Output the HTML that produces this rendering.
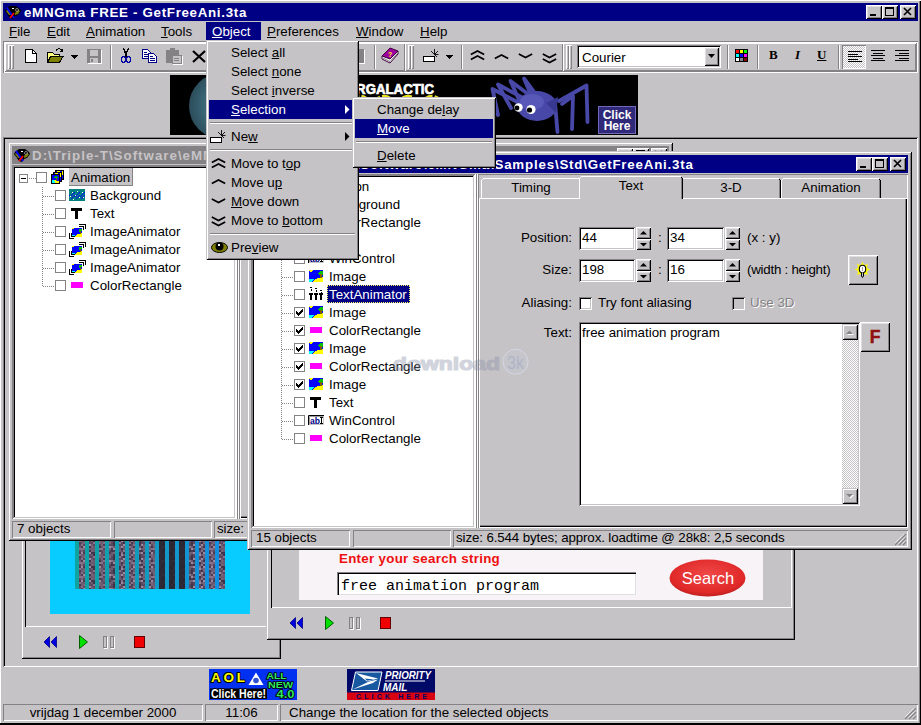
<!DOCTYPE html><html><head><meta charset="utf-8"><title>eMNGma FREE</title><style>
html,body{margin:0;padding:0;background:#c6c3c6;}
body{width:921px;height:725px;overflow:hidden;position:relative;font-family:"Liberation Sans",sans-serif;font-size:13.33px;color:#000;}
.a{position:absolute;box-sizing:border-box;}
.t{white-space:nowrap;line-height:18px;height:18px;}
u{text-decoration:underline;text-underline-offset:1px;text-decoration-thickness:1px;}
.win{background:#c6c3c6;box-shadow:inset 1px 1px #c6c3c6,inset -1px -1px #000,inset 2px 2px #fff,inset -2px -2px #848284;}
.btn{background:#c6c3c6;box-shadow:inset 1px 1px #fff,inset -1px -1px #000,inset 2px 2px #dfdfdf,inset -2px -2px #848284;}
.sunk{box-shadow:inset 1px 1px #848284,inset -1px -1px #fff,inset 2px 2px #000,inset -2px -2px #c6c3c6;}
.sunk1{box-shadow:inset 1px 1px #848284,inset -1px -1px #fff;}
.rais1{box-shadow:inset 1px 1px #fff,inset -1px -1px #848284;}
.navy{background:#000084;}
.gray{background:#848284;}
.white{background:#fff;}
.b{font-weight:bold;}
.w{color:#fff;}
.dis{color:#848284;text-shadow:1px 1px #fff;}
.chk{background-image:conic-gradient(#fff 25%,#c6c3c6 0 50%,#fff 0 75%,#c6c3c6 0);background-size:2px 2px;}
.vsep{width:2px;border-left:1px solid #848284;border-right:1px solid #fff;}
.hsep{height:2px;border-top:1px solid #848284;border-bottom:1px solid #fff;}
.dotv{width:1px;background-image:linear-gradient(#848284 50%,transparent 0);background-size:1px 2px;}
.doth{height:1px;background-image:linear-gradient(90deg,#848284 50%,transparent 0);background-size:2px 1px;}
.cb{width:11px;height:11px;background:#fff;border:1px solid #848284;}
</style></head><body>
<div class="a " style="left:0px;top:0px;width:921px;height:725px;background:#c6c3c6;box-shadow:inset 1px 1px #fff,inset -1px 0 #000,inset -2px 0 #848284;"></div>
<div class="a " style="left:0px;top:723px;width:921px;height:2px;background:#000;"></div>
<div class="a navy" style="left:3px;top:3px;width:915px;height:18px;"></div>
<svg class="a" style="left:5px;top:6px" width="16" height="13" viewBox="0 0 16 13" ><path d="M1 3 L5 0 H11 L15 3 L16 5 L13 9 L10 10 L8 13 L5 12 L3 9 L0 5 Z" fill="#000"/>
<path d="M2 4 L5 6 L6 9 L4 9 L1 5 Z" fill="#808000"/><path d="M10 7 L13 4 L15 5 L13 8 L10 9 Z" fill="#808000"/>
<circle cx="12" cy="4" r="1.500" fill="none" stroke="#a0a0a0" stroke-width="0.800"/>
<path d="M2 2 L9 12" stroke="#0000ff" stroke-width="2"/>
<path d="M9 7 L5 12" stroke="#ff0000" stroke-width="1.800"/>
<rect x="7" y="2" width="2" height="1" fill="#fff"/></svg>
<div class="a t b w" style="left:24px;top:4px;letter-spacing:0.69px;">eMNGma FREE - GetFreeAni.3ta</div>
<div class="a btn" style="left:866px;top:5px;width:16px;height:14px;"><svg class="a" style="left:0px;top:0px" width="16" height="14" viewBox="0 0 16 14" ><rect x="4" y="9" width="6" height="2" fill="#000"/></svg></div><div class="a btn" style="left:882px;top:5px;width:16px;height:14px;"><svg class="a" style="left:0px;top:0px" width="16" height="14" viewBox="0 0 16 14" ><rect x="3.5" y="3.5" width="8" height="7" fill="none" stroke="#000"/><rect x="3" y="2" width="9" height="2" fill="#000"/></svg></div><div class="a btn" style="left:900px;top:5px;width:16px;height:14px;"><svg class="a" style="left:0px;top:0px" width="16" height="14" viewBox="0 0 16 14" ><path d="M4 3 L11 10 M11 3 L4 10" stroke="#000" stroke-width="1.6" fill="none"/></svg></div>
<div class="a t " style="left:9px;top:23px;"><u>F</u>ile</div>
<div class="a t " style="left:47px;top:23px;"><u>E</u>dit</div>
<div class="a t " style="left:86px;top:23px;"><u>A</u>nimation</div>
<div class="a t " style="left:161px;top:23px;"><u>T</u>ools</div>
<div class="a t " style="left:267px;top:23px;"><u>P</u>references</div>
<div class="a t " style="left:356px;top:23px;"><u>W</u>indow</div>
<div class="a t " style="left:420px;top:23px;"><u>H</u>elp</div>
<div class="a navy" style="left:206px;top:22px;width:55px;height:19px;"></div>
<div class="a t w" style="left:212px;top:23px;"><u>O</u>bject</div>
<div class="a " style="left:3px;top:41px;width:915px;height:32px;box-shadow:inset 1px 1px #848284,inset -1px -1px #fff,inset 2px 2px #fff,inset -2px -2px #848284;"></div>
<div class="a rais1" style="left:5px;top:43px;width:400px;height:28px;"></div><div class="a rais1" style="left:8px;top:45px;width:3px;height:24px;"></div><div class="a rais1" style="left:11px;top:45px;width:3px;height:24px;"></div>
<div class="a rais1" style="left:405px;top:43px;width:158px;height:28px;"></div><div class="a rais1" style="left:408px;top:45px;width:3px;height:24px;"></div><div class="a rais1" style="left:411px;top:45px;width:3px;height:24px;"></div>
<div class="a rais1" style="left:563px;top:43px;width:353px;height:28px;"></div><div class="a rais1" style="left:566px;top:45px;width:3px;height:24px;"></div><div class="a rais1" style="left:569px;top:45px;width:3px;height:24px;"></div>
<svg class="a" style="left:25px;top:49px" width="12" height="14" viewBox="0 0 12 14" shape-rendering="crispEdges"><path d="M0.5 0.5 H7.5 L11.5 4.5 V13.5 H0.5 Z" fill="#fff" stroke="#000"/><path d="M7.5 0.5 V4.5 H11.5" fill="none" stroke="#000"/></svg>
<svg class="a" style="left:47px;top:47px" width="17" height="16" viewBox="0 0 17 16" shape-rendering="crispEdges"><path d="M0.5 5.5 H5.5 L7 7 H12.5 V15.5 H0.5 Z" fill="#ffff80" stroke="#000"/><path d="M3.5 9.5 H16 L12.5 15.5 H0.5 Z" fill="#808000" stroke="#000"/><path d="M9 3.5 C11 1 14 1.5 15 4 M15.5 1.5 V4.5 H12.5" fill="none" stroke="#000"/></svg>
<svg class="a" style="left:71px;top:55px" width="7" height="4" viewBox="0 0 7 4" shape-rendering="crispEdges"><path d="M0 0 H7 L3.5 4 Z" fill="#000"/></svg>
<svg class="a" style="left:87px;top:49px" width="15" height="15" viewBox="0 0 15 15" shape-rendering="crispEdges"><rect x="0" y="0" width="14" height="14" fill="#848284"/><rect x="3" y="1" width="8" height="6" fill="#c6c3c6"/><rect x="3" y="9" width="8" height="5" fill="#c6c3c6"/><rect x="4" y="10" width="2" height="3" fill="#848284"/><path d="M14.5 1 V14.5 H1" stroke="#fff" fill="none"/></svg>
<div class="a vsep" style="left:110px;top:45px;width:2px;height:24px;"></div>
<svg class="a" style="left:121px;top:48px" width="10" height="15" viewBox="0 0 10 15" shape-rendering="crispEdges"><path d="M2.5 0 L6 9 M7.5 0 L4 9" stroke="#000" stroke-width="1.4" fill="none"/><ellipse cx="2.5" cy="11.5" rx="2" ry="2.8" fill="none" stroke="#0000a0" stroke-width="1.3"/><ellipse cx="7.5" cy="11.5" rx="2" ry="2.8" fill="none" stroke="#0000a0" stroke-width="1.3"/></svg>
<svg class="a" style="left:142px;top:49px" width="15" height="14" viewBox="0 0 15 14" shape-rendering="crispEdges"><path d="M0.5 0.5 H5.5 L8.5 3.5 V9.5 H0.5 Z" fill="#fff" stroke="#000084"/><path d="M6.5 4.5 H11.5 L14.5 7.5 V13.5 H6.5 Z" fill="#fff" stroke="#000084"/><path d="M2 3.5 H5 M2 5.5 H6 M2 7.5 H6 M8 7.5 H11 M8 9.5 H13 M8 11.5 H13" stroke="#000084"/></svg>
<svg class="a" style="left:166px;top:48px" width="17" height="17" viewBox="0 0 17 17" shape-rendering="crispEdges"><rect x="0" y="2" width="13" height="13" rx="1" fill="#848284"/><rect x="4" y="0" width="5" height="4" fill="#848284"/><rect x="6" y="7" width="9" height="8" fill="#c6c3c6" stroke="#848284"/><path d="M8 10.5 H13 M8 12.5 H13" stroke="#848284"/><path d="M16.5 8 V16.5 H7" stroke="#fff" fill="none"/></svg>
<svg class="a" style="left:192px;top:50px" width="14" height="13" viewBox="0 0 14 13" shape-rendering="crispEdges"><path d="M1 1 L13 12 M13 1 L1 12" stroke="#000" stroke-width="2.2" fill="none" shape-rendering="auto"/></svg>
<div class="a vsep" style="left:214px;top:45px;width:2px;height:24px;"></div>
<div class="a " style="left:350px;top:49px;width:14px;height:14px;background:#848284;box-shadow:1px 1px #fff;"></div>
<div class="a vsep" style="left:374px;top:45px;width:2px;height:24px;"></div>
<svg class="a" style="left:381px;top:47px" width="18" height="17" viewBox="0 0 18 17" ><path d="M1 9 L9 1 L17 4 L9 12 Z" fill="#a000a0" stroke="#400040" stroke-width="1"/><path d="M1 9 V12 L9 16 L17 7 V4 L9 12 Z" fill="#fff" stroke="#400040" stroke-width="1"/><path d="M1 10.5 L9 14.5 L17 5.5" stroke="#848284" fill="none"/><text x="7" y="9.5" font-size="7" font-weight="bold" fill="#ffff00" font-family="Liberation Sans,sans-serif">?</text></svg>
<svg class="a" style="left:423px;top:48px" width="16" height="15" viewBox="0 0 16 15" ><rect x="0.5" y="8.5" width="11" height="5" fill="#fff" stroke="#000"/><path d="M11.5 6.5 V1 M11.5 6.5 L8 3 M11.5 6.5 L15 3 M11.5 6.5 H15.5 M11.5 6.5 L14 9" stroke="#000" stroke-width="0.9" fill="none"/></svg>
<svg class="a" style="left:446px;top:55px" width="7" height="4" viewBox="0 0 7 4" shape-rendering="crispEdges"><path d="M0 0 H7 L3.5 4 Z" fill="#000"/></svg>
<div class="a vsep" style="left:461px;top:45px;width:2px;height:24px;"></div>
<svg class="a" style="left:470px;top:49.5px" width="15" height="11" viewBox="0 0 15 11" ><path d="M0.8 4.5 L7.5 1 L14.2 4.5" stroke="#000" stroke-width="1.7" fill="none" stroke-linejoin="miter"/><path d="M0.8 9.5 L7.5 6 L14.2 9.5" stroke="#000" stroke-width="1.7" fill="none" stroke-linejoin="miter"/></svg>
<svg class="a" style="left:493.5px;top:54px" width="15" height="11" viewBox="0 0 15 11" ><path d="M0.8 4.5 L7.5 1 L14.2 4.5" stroke="#000" stroke-width="1.7" fill="none" stroke-linejoin="miter"/></svg>
<svg class="a" style="left:518px;top:53px" width="15" height="11" viewBox="0 0 15 11" ><path d="M0.8 1 L7.5 4.5 L14.2 1" stroke="#000" stroke-width="1.7" fill="none" stroke-linejoin="miter"/></svg>
<svg class="a" style="left:542px;top:53px" width="15" height="11" viewBox="0 0 15 11" ><path d="M0.8 1 L7.5 4.5 L14.2 1" stroke="#000" stroke-width="1.7" fill="none" stroke-linejoin="miter"/><path d="M0.8 6 L7.5 9.5 L14.2 6" stroke="#000" stroke-width="1.7" fill="none" stroke-linejoin="miter"/></svg>
<div class="a sunk white" style="left:577px;top:45px;width:144px;height:23px;"></div>
<div class="a t " style="left:582px;top:49px;">Courier</div>
<div class="a btn" style="left:704px;top:47px;width:15px;height:19px;"><svg class="a" style="left:0px;top:0px" width="15" height="19" viewBox="0 0 15 19" ><path d="M4 7 H11 L7.5 11 Z" fill="#000"/></svg></div>
<div class="a vsep" style="left:727px;top:45px;width:2px;height:24px;"></div>
<svg class="a" style="left:735px;top:49px" width="13" height="13" viewBox="0 0 13 13" shape-rendering="crispEdges"><rect x="0" y="0" width="13" height="13" fill="#000"/><rect x="1" y="1" width="3" height="3" fill="#ff0000"/><rect x="5" y="1" width="3" height="3" fill="#ffff00"/><rect x="9" y="1" width="3" height="3" fill="#00ff00"/><rect x="1" y="5" width="3" height="3" fill="#00ffff"/><rect x="5" y="5" width="3" height="3" fill="#0000ff"/><rect x="9" y="5" width="3" height="3" fill="#ff00ff"/><rect x="1" y="9" width="3" height="3" fill="#ffffff"/><rect x="5" y="9" width="3" height="3" fill="#848284"/><rect x="9" y="9" width="3" height="3" fill="#800000"/></svg>
<div class="a vsep" style="left:757px;top:45px;width:2px;height:24px;"></div>
<div class="a t b" style="left:769px;top:46px;font-family:Liberation Serif,serif;font-size:13px;">B</div>
<div class="a t b" style="left:795px;top:46px;font-family:Liberation Serif,serif;font-size:13px;font-style:italic;">I</div>
<div class="a t b" style="left:817px;top:46px;font-family:Liberation Serif,serif;font-size:13px;"><u>U</u></div>
<div class="a vsep" style="left:838px;top:45px;width:2px;height:24px;"></div>
<div class="a sunk1 chk" style="left:842px;top:45px;width:24px;height:24px;"></div>
<svg class="a" style="left:848px;top:51px" width="14" height="11" viewBox="0 0 14 11" shape-rendering="crispEdges"><rect x="0" y="0" width="14" height="1" fill="#000"/><rect x="0" y="3" width="10" height="1" fill="#000"/><rect x="0" y="5" width="14" height="1" fill="#000"/><rect x="0" y="8" width="10" height="1" fill="#000"/><rect x="0" y="10" width="14" height="1" fill="#000"/></svg>
<svg class="a" style="left:871px;top:50px" width="14" height="11" viewBox="0 0 14 11" shape-rendering="crispEdges"><rect x="0.0" y="0" width="14" height="1" fill="#000"/><rect x="2.0" y="3" width="10" height="1" fill="#000"/><rect x="0.0" y="5" width="14" height="1" fill="#000"/><rect x="2.0" y="8" width="10" height="1" fill="#000"/><rect x="0.0" y="10" width="14" height="1" fill="#000"/></svg>
<svg class="a" style="left:895px;top:50px" width="14" height="11" viewBox="0 0 14 11" shape-rendering="crispEdges"><rect x="0" y="0" width="14" height="1" fill="#000"/><rect x="4" y="3" width="10" height="1" fill="#000"/><rect x="0" y="5" width="14" height="1" fill="#000"/><rect x="4" y="8" width="10" height="1" fill="#000"/><rect x="0" y="10" width="14" height="1" fill="#000"/></svg>
<svg class="a" style="left:170px;top:75px" width="468" height="60" viewBox="0 0 468 60" ><defs><radialGradient id="pl" cx="0.6" cy="0.5" r="0.6"><stop offset="0" stop-color="#58a0b8"/><stop offset="0.6" stop-color="#3a6878"/><stop offset="1" stop-color="#2c4c5a"/></radialGradient>
<clipPath id="bc"><rect x="0" y="0" width="468" height="60"/></clipPath></defs>
<rect x="0" y="0" width="468" height="60" fill="#000"/>
<g clip-path="url(#bc)">
<circle cx="52" cy="31" r="33" fill="url(#pl)"/>
<text x="156" y="18.500" font-family="Liberation Sans,sans-serif" font-weight="bold" font-size="14.500" fill="#fff" stroke="#fff" stroke-width="0.700" textLength="108" lengthAdjust="spacingAndGlyphs">INTERGALACTIC</text>
<path d="M160 24 q6 -4 12 0 t12 0 t12 0 t12 0 t12 0 t12 0 t12 0 t12 0 t12 0" stroke="#e8e020" stroke-width="4.500" fill="none" stroke-dasharray="9 2"/>
<g stroke="#4848a8" stroke-width="3.800" fill="none" stroke-linecap="round" stroke-linejoin="round">
<path d="M351 29 L322.500 14 L328 40"/>
<path d="M355 24 L328 9.500 L341 33"/>
<path d="M358 19 L340.500 6 L350 27"/>
<path d="M364 17 L354 3.500 L361 20"/>
<path d="M385 28 L387.500 57"/>
<path d="M389 26 L416.500 10.500 L417.500 47"/>
<path d="M392 29 L403 21 L402 54"/>
</g>
<ellipse cx="367" cy="31" rx="20" ry="15" fill="#4848a8"/>
<ellipse cx="362" cy="27" rx="12" ry="8" fill="#5858b8"/>
<path d="M376 28 L388 22 L386 38 Z" fill="#383890"/>
<circle cx="348.5" cy="32.5" r="4.2" fill="#fff"/><circle cx="347" cy="33" r="2.4" fill="#000"/>
<circle cx="361" cy="34.5" r="4.6" fill="#fff"/><circle cx="359.5" cy="35" r="2.6" fill="#000"/>
<rect x="428.500" y="31.500" width="37" height="27" fill="#302878" stroke="#7068b8"/>
<text x="447" y="43.500" text-anchor="middle" font-family="Liberation Sans,sans-serif" font-weight="bold" font-size="12" fill="#fff">Click</text>
<text x="447" y="55" text-anchor="middle" font-family="Liberation Sans,sans-serif" font-weight="bold" font-size="12" fill="#fff">Here</text>
</g></svg>
<div class="a " style="left:3px;top:137px;width:915px;height:530px;box-shadow:inset 1px 1px #848284,inset -1px -1px #fff,inset 2px 2px #000,inset -2px -2px #c6c3c6;"></div>
<div class="a win" style="left:21px;top:400px;width:260px;height:259px;"></div>
<div class="a " style="left:25px;top:420px;width:252px;height:207px;box-shadow:inset 1px 1px #000,inset -1px -1px #fff;"></div>
<div class="a " style="left:50px;top:430px;width:200px;height:184px;background:#08cbff;"></div>
<svg class="a" style="left:75px;top:430px" width="150" height="159" viewBox="0 0 150 159" shape-rendering="crispEdges"><defs><pattern id="nz" width="26" height="14" patternUnits="userSpaceOnUse"><rect width="26" height="14" fill="#6c5a70"/><rect x="0" y="2" width="2" height="2" fill="#7a6478"/><rect x="0" y="6" width="2" height="2" fill="#8a7088"/><rect x="0" y="8" width="2" height="2" fill="#5a4860"/><rect x="0" y="10" width="2" height="2" fill="#5a4860"/><rect x="2" y="0" width="2" height="2" fill="#8a7088"/><rect x="2" y="2" width="2" height="2" fill="#4a3c50"/><rect x="2" y="4" width="2" height="2" fill="#8a7088"/><rect x="2" y="6" width="2" height="2" fill="#5a4860"/><rect x="2" y="12" width="2" height="2" fill="#5a4860"/><rect x="4" y="0" width="2" height="2" fill="#4a3c50"/><rect x="4" y="2" width="2" height="2" fill="#5a4860"/><rect x="4" y="6" width="2" height="2" fill="#8a7088"/><rect x="4" y="8" width="2" height="2" fill="#5a4860"/><rect x="4" y="10" width="2" height="2" fill="#4a3c50"/><rect x="4" y="12" width="2" height="2" fill="#8a7088"/><rect x="6" y="2" width="2" height="2" fill="#8a7088"/><rect x="6" y="4" width="2" height="2" fill="#4a3c50"/><rect x="6" y="6" width="2" height="2" fill="#8a7088"/><rect x="6" y="8" width="2" height="2" fill="#7a6478"/><rect x="6" y="10" width="2" height="2" fill="#a088a0"/><rect x="8" y="0" width="2" height="2" fill="#7a6478"/><rect x="8" y="2" width="2" height="2" fill="#5a4860"/><rect x="8" y="4" width="2" height="2" fill="#a088a0"/><rect x="8" y="6" width="2" height="2" fill="#7a6478"/><rect x="8" y="8" width="2" height="2" fill="#5a4860"/><rect x="8" y="10" width="2" height="2" fill="#4a3c50"/><rect x="10" y="0" width="2" height="2" fill="#5a4860"/><rect x="10" y="2" width="2" height="2" fill="#5a4860"/><rect x="10" y="4" width="2" height="2" fill="#8a7088"/><rect x="10" y="6" width="2" height="2" fill="#4a3c50"/><rect x="10" y="8" width="2" height="2" fill="#40344a"/><rect x="12" y="0" width="2" height="2" fill="#40344a"/><rect x="12" y="2" width="2" height="2" fill="#40344a"/><rect x="12" y="6" width="2" height="2" fill="#a088a0"/><rect x="12" y="8" width="2" height="2" fill="#4a3c50"/><rect x="12" y="10" width="2" height="2" fill="#7a6478"/><rect x="12" y="12" width="2" height="2" fill="#4a3c50"/><rect x="14" y="0" width="2" height="2" fill="#5a4860"/><rect x="14" y="2" width="2" height="2" fill="#a088a0"/><rect x="14" y="4" width="2" height="2" fill="#40344a"/><rect x="14" y="8" width="2" height="2" fill="#40344a"/><rect x="14" y="10" width="2" height="2" fill="#a088a0"/><rect x="14" y="12" width="2" height="2" fill="#5a4860"/><rect x="16" y="0" width="2" height="2" fill="#5a4860"/><rect x="16" y="4" width="2" height="2" fill="#7a6478"/><rect x="16" y="8" width="2" height="2" fill="#7a6478"/><rect x="16" y="10" width="2" height="2" fill="#40344a"/><rect x="18" y="0" width="2" height="2" fill="#8a7088"/><rect x="18" y="2" width="2" height="2" fill="#5a4860"/><rect x="18" y="10" width="2" height="2" fill="#40344a"/><rect x="18" y="12" width="2" height="2" fill="#40344a"/><rect x="20" y="0" width="2" height="2" fill="#5a4860"/><rect x="20" y="2" width="2" height="2" fill="#5a4860"/><rect x="20" y="4" width="2" height="2" fill="#a088a0"/><rect x="20" y="6" width="2" height="2" fill="#40344a"/><rect x="20" y="8" width="2" height="2" fill="#5a4860"/><rect x="20" y="10" width="2" height="2" fill="#8a7088"/><rect x="20" y="12" width="2" height="2" fill="#a088a0"/><rect x="22" y="0" width="2" height="2" fill="#40344a"/><rect x="22" y="2" width="2" height="2" fill="#a088a0"/><rect x="22" y="8" width="2" height="2" fill="#8a7088"/><rect x="22" y="10" width="2" height="2" fill="#40344a"/><rect x="24" y="0" width="2" height="2" fill="#7a6478"/><rect x="24" y="2" width="2" height="2" fill="#5a4860"/><rect x="24" y="4" width="2" height="2" fill="#40344a"/><rect x="24" y="6" width="2" height="2" fill="#8a7088"/><rect x="24" y="8" width="2" height="2" fill="#4a3c50"/><rect x="24" y="10" width="2" height="2" fill="#a088a0"/><rect x="24" y="12" width="2" height="2" fill="#7a6478"/></pattern></defs><rect width="150" height="160" fill="url(#nz)"/><rect x="0" y="0" width="4" height="160" fill="#10a4a0"/><rect x="10" y="0" width="4" height="160" fill="#10a3a5"/><rect x="20" y="0" width="4" height="160" fill="#11a1a9"/><rect x="30" y="0" width="4" height="160" fill="#11a0ae"/><rect x="40" y="0" width="4" height="160" fill="#119eb2"/><rect x="50" y="0" width="4" height="160" fill="#119db7"/><rect x="60" y="0" width="4" height="160" fill="#129bbb"/><rect x="70" y="0" width="4" height="160" fill="#129ac0"/><rect x="80" y="0" width="4" height="160" fill="#1299c5"/><rect x="90" y="0" width="4" height="160" fill="#1397c9"/><rect x="100" y="0" width="4" height="160" fill="#1396ce"/><rect x="110" y="0" width="4" height="160" fill="#1394d2"/><rect x="120" y="0" width="4" height="160" fill="#1393d7"/><rect x="130" y="0" width="4" height="160" fill="#1491db"/><rect x="140" y="0" width="4" height="160" fill="#1490e0"/><rect x="84" y="0" width="6" height="160" fill="#26242e" opacity="0.900"/><rect x="94" y="0" width="6" height="160" fill="#26242e" opacity="0.900"/><rect x="104" y="0" width="6" height="160" fill="#26242e" opacity="0.900"/></svg>
<svg class="a" style="left:44px;top:635px" width="110" height="14" viewBox="0 0 110 14" ><path d="M0 7 L5.500 1.500 V12.500 Z M7 7 L12.500 1.500 V12.500 Z" fill="#0000e0" stroke="#000084" stroke-width="0.800"/><path d="M35.500 0.500 L43.500 7 L35.500 13.500 Z" fill="#00e000" stroke="#006000" stroke-width="1"/><rect x="59.500" y="1.500" width="3" height="11" fill="#c6c3c6" stroke="#848284"/><rect x="66.500" y="1.500" width="3" height="11" fill="#c6c3c6" stroke="#848284"/><path d="M63.500 2 V13.500 H60 M70.500 2 V13.500 H67" stroke="#fff" fill="none"/><rect x="90.500" y="1.500" width="10" height="11" fill="#f00000" stroke="#600000"/></svg>
<div class="a win" style="left:266px;top:400px;width:529px;height:240px;"></div>
<div class="a " style="left:271px;top:420px;width:521px;height:188px;box-shadow:inset 1px 1px #000,inset -1px -1px #fff;"></div>
<div class="a " style="left:299px;top:430px;width:464px;height:170px;background:#f7f3f7;"></div>
<div class="a t b" style="left:339px;top:550px;color:#ee1010;letter-spacing:0.29px;">Enter your search string</div>
<div class="a white" style="left:337px;top:572px;width:299px;height:23px;box-shadow:inset 1px 1px #848284,inset 2px 2px #000,inset -1px -1px #e0e0e0;"></div>
<div class="a t " style="left:341px;top:578px;font-family:Liberation Mono,monospace;font-size:15px;">free animation program</div>
<svg class="a" style="left:669px;top:559px" width="78" height="38" viewBox="0 0 78 38" ><defs><radialGradient id="sb" cx="0.5" cy="0.4" r="0.7"><stop offset="0" stop-color="#f04848"/><stop offset="0.7" stop-color="#e02828"/><stop offset="1" stop-color="#a01818"/></radialGradient></defs><ellipse cx="38.500" cy="19" rx="38" ry="18.500" fill="url(#sb)"/><text x="39" y="24.500" text-anchor="middle" font-family="Liberation Sans,sans-serif" font-size="16.500" fill="#fff">Search</text></svg>
<svg class="a" style="left:290px;top:616px" width="110" height="14" viewBox="0 0 110 14" ><path d="M0 7 L5.500 1.500 V12.500 Z M7 7 L12.500 1.500 V12.500 Z" fill="#0000e0" stroke="#000084" stroke-width="0.800"/><path d="M35.500 0.500 L43.500 7 L35.500 13.500 Z" fill="#00e000" stroke="#006000" stroke-width="1"/><rect x="59.500" y="1.500" width="3" height="11" fill="#c6c3c6" stroke="#848284"/><rect x="66.500" y="1.500" width="3" height="11" fill="#c6c3c6" stroke="#848284"/><path d="M63.500 2 V13.500 H60 M70.500 2 V13.500 H67" stroke="#fff" fill="none"/><rect x="90.500" y="1.500" width="10" height="11" fill="#f00000" stroke="#600000"/></svg>
<div class="a win" style="left:8px;top:142px;width:665px;height:399px;"></div><div class="a gray" style="left:12px;top:146px;width:657px;height:18px;"></div><svg class="a" style="left:14px;top:149px" width="16" height="13" viewBox="0 0 16 13" ><path d="M1 3 L5 0 H11 L15 3 L16 5 L13 9 L10 10 L8 13 L5 12 L3 9 L0 5 Z" fill="#000"/>
<path d="M2 4 L5 6 L6 9 L4 9 L1 5 Z" fill="#808000"/><path d="M10 7 L13 4 L15 5 L13 8 L10 9 Z" fill="#808000"/>
<circle cx="12" cy="4" r="1.500" fill="none" stroke="#a0a0a0" stroke-width="0.800"/>
<path d="M2 2 L9 12" stroke="#0000ff" stroke-width="2"/>
<path d="M9 7 L5 12" stroke="#ff0000" stroke-width="1.800"/>
<rect x="7" y="2" width="2" height="1" fill="#fff"/></svg><div class="a t b" style="left:32px;top:147px;color:#c6c3c6;letter-spacing:1.0px;">D:\Triple-T\Software\eMNGma\Samples\Std\GetFreeAni.3ta</div><div class="a btn" style="left:617px;top:148px;width:16px;height:14px;"><svg class="a" style="left:0px;top:0px" width="16" height="14" viewBox="0 0 16 14" ><rect x="4" y="9" width="6" height="2" fill="#000"/></svg></div><div class="a btn" style="left:633px;top:148px;width:16px;height:14px;"><svg class="a" style="left:0px;top:0px" width="16" height="14" viewBox="0 0 16 14" ><rect x="3.5" y="3.5" width="8" height="7" fill="none" stroke="#000"/><rect x="3" y="2" width="9" height="2" fill="#000"/></svg></div><div class="a btn" style="left:651px;top:148px;width:16px;height:14px;"><svg class="a" style="left:0px;top:0px" width="16" height="14" viewBox="0 0 16 14" ><path d="M4 3 L11 10 M11 3 L4 10" stroke="#000" stroke-width="1.6" fill="none"/></svg></div><div class="a sunk white" style="left:12px;top:165px;width:224px;height:354px;"></div><div class="a " style="left:13px;top:166px;width:1px;height:352px;background:#848284;"></div><div class="a " style="left:13px;top:166px;width:222px;height:1px;background:#848284;"></div><div class="a " style="left:14px;top:167px;width:1px;height:350px;background:#000;"></div><div class="a " style="left:14px;top:167px;width:220px;height:1px;background:#000;"></div><div class="a " style="left:236px;top:165px;width:1px;height:354px;background:#fff;"></div><div class="a " style="left:237px;top:165px;width:1px;height:354px;background:#848284;"></div><div class="a " style="left:238px;top:165px;width:1px;height:354px;background:#fff;"></div><div class="a sunk1" style="left:239px;top:165px;width:430px;height:354px;"></div><div class="a dotv" style="left:42px;top:187px;width:1px;height:100px;"></div><div class="a " style="left:19px;top:174px;width:9px;height:9px;background:#fff;border:1px solid #848284;"><svg class="a" style="left:0px;top:0px" width="7" height="7" viewBox="0 0 7 7" shape-rendering="crispEdges"><rect x="1" y="3" width="5" height="1" fill="#000"/></svg></div><div class="a doth" style="left:29px;top:178px;width:7px;height:1px;"></div><div class="a cb" style="left:36px;top:172px;width:11px;height:11px;"></div><svg class="a" style="left:51px;top:170px" width="13" height="14" viewBox="0 0 13 14" shape-rendering="crispEdges"><rect x="4.5" y="0.5" width="8" height="9" fill="#0000ff" stroke="#000"/><rect x="11" y="1" width="1" height="4" fill="#ffff00"/><rect x="6" y="1" width="3" height="1" fill="#ffff00"/><rect x="2.5" y="2.5" width="8" height="9" fill="#0000ff" stroke="#000"/><rect x="9" y="3" width="1" height="4" fill="#ffff00"/><rect x="4" y="3" width="3" height="1" fill="#ffff00"/><rect x="0.5" y="4.5" width="8" height="9" fill="#0000ff" stroke="#000"/><path d="M1 11 L4 10 L8 11 V13 H1 Z" fill="#ffff00"/><path d="M1 10 H3 L4 12 L3 13 H1 Z" fill="#00ffff"/><path d="M3 8 L5 5 L7 8 H5.500 V10 H4.500 V8 Z" fill="#00c000"/><rect x="4.500" y="8" width="1" height="3" fill="#806000"/></svg><div class="a " style="left:69px;top:168px;width:8px;height:0px;"></div><div class="a t" style="left:69px;top:168px;height:18px;line-height:16px;padding:2px 3px 0 2px;background:#c6c3c6;box-shadow:inset -1px -1px #848284;">Animation</div><div class="a doth" style="left:43px;top:196px;width:11px;height:1px;"></div><div class="a cb" style="left:55px;top:190px;width:11px;height:11px;"></div><svg class="a" style="left:69px;top:189px" width="16" height="12" viewBox="0 0 16 12" shape-rendering="crispEdges"><clipPath id="bgc69187"><rect width="16" height="12"/></clipPath><g clip-path="url(#bgc69187)"><rect width="16" height="12" fill="#008080"/><path d="M-3.5 10.500 L0.5 6.500 L1.5 7.500 L5.5 3.500" stroke="#0000ff" stroke-width="1.400" fill="none"/><path d="M1.5 10.500 L5.5 6.500 L6.5 7.500 L10.5 3.500" stroke="#0000ff" stroke-width="1.400" fill="none"/><path d="M6.5 10.500 L10.5 6.500 L11.5 7.500 L15.5 3.500" stroke="#0000ff" stroke-width="1.400" fill="none"/><path d="M11.5 10.500 L15.5 6.500 L16.5 7.500 L20.5 3.500" stroke="#0000ff" stroke-width="1.400" fill="none"/><rect x="3" y="3" width="1" height="1" fill="#fff"/><rect x="8" y="2" width="1" height="1" fill="#fff"/><rect x="13" y="3" width="1" height="1" fill="#fff"/><rect x="1" y="7" width="1" height="1" fill="#fff"/><rect x="6" y="6" width="1" height="1" fill="#fff"/><rect x="10" y="8" width="1" height="1" fill="#fff"/><rect x="14" y="8" width="1" height="1" fill="#fff"/><rect x="4" y="10" width="1" height="1" fill="#fff"/></g></svg><div class="a t " style="left:90px;top:187px;">Background</div><div class="a doth" style="left:43px;top:214px;width:11px;height:1px;"></div><div class="a cb" style="left:55px;top:208px;width:11px;height:11px;"></div><svg class="a" style="left:71px;top:208px" width="11" height="11" viewBox="0 0 11 11" shape-rendering="crispEdges"><path d="M0 0 H11 V3 H7 V11 H4 V3 H0 Z" fill="#000"/></svg><div class="a t " style="left:90px;top:205px;">Text</div><div class="a doth" style="left:43px;top:232px;width:11px;height:1px;"></div><div class="a cb" style="left:55px;top:226px;width:11px;height:11px;"></div><svg class="a" style="left:69px;top:224px" width="17" height="16" viewBox="0 0 17 16" shape-rendering="crispEdges"><g transform="translate(3,4) scale(0.7143,0.75)"><rect width="14" height="12" fill="#0000ff"/><path d="M0 0 H4 L2 2 L0 1 Z" fill="#ffff00"/><path d="M0 9 H5 L3 12 H0 Z" fill="#00ffff"/><path d="M14 7 L9 8 L5 10 L3 12 H14 Z" fill="#ffff00"/><path d="M9 3 L11 1 L14 1 V5 L12 4 L10 5 Z" fill="#00c000"/><rect x="11" y="4" width="2" height="4" fill="#806000"/></g><path d="M9.500 0.500 H16.500 V5 M9.500 2.500 H14.500 V6" stroke="#000" fill="none"/><path d="M0.500 9 V14.500 H5 M2.500 9 V12.500 H6" stroke="#000" fill="none"/></svg><div class="a t " style="left:90px;top:223px;">ImageAnimator</div><div class="a doth" style="left:43px;top:250px;width:11px;height:1px;"></div><div class="a cb" style="left:55px;top:244px;width:11px;height:11px;"></div><svg class="a" style="left:69px;top:242px" width="17" height="16" viewBox="0 0 17 16" shape-rendering="crispEdges"><g transform="translate(3,4) scale(0.7143,0.75)"><rect width="14" height="12" fill="#0000ff"/><path d="M0 0 H4 L2 2 L0 1 Z" fill="#ffff00"/><path d="M0 9 H5 L3 12 H0 Z" fill="#00ffff"/><path d="M14 7 L9 8 L5 10 L3 12 H14 Z" fill="#ffff00"/><path d="M9 3 L11 1 L14 1 V5 L12 4 L10 5 Z" fill="#00c000"/><rect x="11" y="4" width="2" height="4" fill="#806000"/></g><path d="M9.500 0.500 H16.500 V5 M9.500 2.500 H14.500 V6" stroke="#000" fill="none"/><path d="M0.500 9 V14.500 H5 M2.500 9 V12.500 H6" stroke="#000" fill="none"/></svg><div class="a t " style="left:90px;top:241px;">ImageAnimator</div><div class="a doth" style="left:43px;top:268px;width:11px;height:1px;"></div><div class="a cb" style="left:55px;top:262px;width:11px;height:11px;"></div><svg class="a" style="left:69px;top:260px" width="17" height="16" viewBox="0 0 17 16" shape-rendering="crispEdges"><g transform="translate(3,4) scale(0.7143,0.75)"><rect width="14" height="12" fill="#0000ff"/><path d="M0 0 H4 L2 2 L0 1 Z" fill="#ffff00"/><path d="M0 9 H5 L3 12 H0 Z" fill="#00ffff"/><path d="M14 7 L9 8 L5 10 L3 12 H14 Z" fill="#ffff00"/><path d="M9 3 L11 1 L14 1 V5 L12 4 L10 5 Z" fill="#00c000"/><rect x="11" y="4" width="2" height="4" fill="#806000"/></g><path d="M9.500 0.500 H16.500 V5 M9.500 2.500 H14.500 V6" stroke="#000" fill="none"/><path d="M0.500 9 V14.500 H5 M2.500 9 V12.500 H6" stroke="#000" fill="none"/></svg><div class="a t " style="left:90px;top:259px;">ImageAnimator</div><div class="a doth" style="left:43px;top:286px;width:11px;height:1px;"></div><div class="a cb" style="left:55px;top:280px;width:11px;height:11px;"></div><svg class="a" style="left:71px;top:282px" width="12" height="6" viewBox="0 0 12 6" shape-rendering="crispEdges"><rect width="12" height="6" fill="#ff00ff"/></svg><div class="a t " style="left:90px;top:277px;">ColorRectangle</div><div class="a sunk1" style="left:12px;top:521px;width:99px;height:17px;"></div><div class="a t " style="left:17px;top:520px;">7 objects</div><div class="a sunk1" style="left:114px;top:521px;width:98px;height:17px;"></div><div class="a sunk1" style="left:214px;top:521px;width:455px;height:17px;"></div><div class="a t " style="left:217px;top:520px;letter-spacing:-0.12px;">size: 4.812 bytes; approx. loadtime @ 28k8: 1,8 seconds</div><svg class="a" style="left:656px;top:525px" width="12" height="12" viewBox="0 0 12 12" ><path d="M11 0 L0 11 M11 4 L4 11 M11 8 L8 11" stroke="#848284" stroke-width="1.400"/><path d="M11 1.200 L1.200 11 M11 5.200 L5.200 11 M11 9.200 L9.200 11" stroke="#fff" stroke-width="0.800" transform="translate(-1.500,-1.500)"/></svg>
<div class="a " style="left:240px;top:165px;width:429px;height:353px;box-shadow:inset 1px 1px #fff,inset -1px -1px #000,inset -2px -2px #848284;"></div>
<div class="a win" style="left:247px;top:151px;width:665px;height:399px;"></div><div class="a navy" style="left:251px;top:155px;width:657px;height:18px;"></div><svg class="a" style="left:253px;top:158px" width="16" height="13" viewBox="0 0 16 13" ><path d="M1 3 L5 0 H11 L15 3 L16 5 L13 9 L10 10 L8 13 L5 12 L3 9 L0 5 Z" fill="#000"/>
<path d="M2 4 L5 6 L6 9 L4 9 L1 5 Z" fill="#808000"/><path d="M10 7 L13 4 L15 5 L13 8 L10 9 Z" fill="#808000"/>
<circle cx="12" cy="4" r="1.500" fill="none" stroke="#a0a0a0" stroke-width="0.800"/>
<path d="M2 2 L9 12" stroke="#0000ff" stroke-width="2"/>
<path d="M9 7 L5 12" stroke="#ff0000" stroke-width="1.800"/>
<rect x="7" y="2" width="2" height="1" fill="#fff"/></svg><div class="a t b" style="left:281px;top:156px;color:#fff;letter-spacing:0.8px;">D:\Triple-T\Software\eMNGma\Samples\Std\GetFreeAni.3ta</div><div class="a btn" style="left:856px;top:157px;width:16px;height:14px;"><svg class="a" style="left:0px;top:0px" width="16" height="14" viewBox="0 0 16 14" ><rect x="4" y="9" width="6" height="2" fill="#000"/></svg></div><div class="a btn" style="left:872px;top:157px;width:16px;height:14px;"><svg class="a" style="left:0px;top:0px" width="16" height="14" viewBox="0 0 16 14" ><rect x="3.5" y="3.5" width="8" height="7" fill="none" stroke="#000"/><rect x="3" y="2" width="9" height="2" fill="#000"/></svg></div><div class="a btn" style="left:890px;top:157px;width:16px;height:14px;"><svg class="a" style="left:0px;top:0px" width="16" height="14" viewBox="0 0 16 14" ><path d="M4 3 L11 10 M11 3 L4 10" stroke="#000" stroke-width="1.6" fill="none"/></svg></div><div class="a sunk white" style="left:251px;top:174px;width:224px;height:354px;"></div><div class="a " style="left:252px;top:175px;width:1px;height:352px;background:#848284;"></div><div class="a " style="left:252px;top:175px;width:222px;height:1px;background:#848284;"></div><div class="a " style="left:253px;top:176px;width:1px;height:350px;background:#000;"></div><div class="a " style="left:253px;top:176px;width:220px;height:1px;background:#000;"></div><div class="a " style="left:475px;top:174px;width:1px;height:354px;background:#fff;"></div><div class="a " style="left:476px;top:174px;width:1px;height:354px;background:#848284;"></div><div class="a " style="left:477px;top:174px;width:1px;height:354px;background:#fff;"></div><div class="a sunk1" style="left:478px;top:174px;width:430px;height:354px;"></div><div class="a dotv" style="left:281px;top:196px;width:1px;height:244px;"></div><div class="a " style="left:258px;top:183px;width:9px;height:9px;background:#fff;border:1px solid #848284;"><svg class="a" style="left:0px;top:0px" width="7" height="7" viewBox="0 0 7 7" shape-rendering="crispEdges"><rect x="1" y="3" width="5" height="1" fill="#000"/></svg></div><div class="a doth" style="left:268px;top:187px;width:7px;height:1px;"></div><div class="a cb" style="left:275px;top:181px;width:11px;height:11px;"></div><svg class="a" style="left:290px;top:179px" width="13" height="14" viewBox="0 0 13 14" shape-rendering="crispEdges"><rect x="4.5" y="0.5" width="8" height="9" fill="#0000ff" stroke="#000"/><rect x="11" y="1" width="1" height="4" fill="#ffff00"/><rect x="6" y="1" width="3" height="1" fill="#ffff00"/><rect x="2.5" y="2.5" width="8" height="9" fill="#0000ff" stroke="#000"/><rect x="9" y="3" width="1" height="4" fill="#ffff00"/><rect x="4" y="3" width="3" height="1" fill="#ffff00"/><rect x="0.5" y="4.5" width="8" height="9" fill="#0000ff" stroke="#000"/><path d="M1 11 L4 10 L8 11 V13 H1 Z" fill="#ffff00"/><path d="M1 10 H3 L4 12 L3 13 H1 Z" fill="#00ffff"/><path d="M3 8 L5 5 L7 8 H5.500 V10 H4.500 V8 Z" fill="#00c000"/><rect x="4.500" y="8" width="1" height="3" fill="#806000"/></svg><div class="a " style="left:308px;top:177px;width:247px;height:0px;"></div><div class="a t " style="left:310px;top:178px;">Animation</div><div class="a doth" style="left:282px;top:205px;width:11px;height:1px;"></div><div class="a cb" style="left:294px;top:199px;width:11px;height:11px;"></div><svg class="a" style="left:308px;top:198px" width="16" height="12" viewBox="0 0 16 12" shape-rendering="crispEdges"><clipPath id="bgc308196"><rect width="16" height="12"/></clipPath><g clip-path="url(#bgc308196)"><rect width="16" height="12" fill="#008080"/><path d="M-3.5 10.500 L0.5 6.500 L1.5 7.500 L5.5 3.500" stroke="#0000ff" stroke-width="1.400" fill="none"/><path d="M1.5 10.500 L5.5 6.500 L6.5 7.500 L10.5 3.500" stroke="#0000ff" stroke-width="1.400" fill="none"/><path d="M6.5 10.500 L10.5 6.500 L11.5 7.500 L15.5 3.500" stroke="#0000ff" stroke-width="1.400" fill="none"/><path d="M11.5 10.500 L15.5 6.500 L16.5 7.500 L20.5 3.500" stroke="#0000ff" stroke-width="1.400" fill="none"/><rect x="3" y="3" width="1" height="1" fill="#fff"/><rect x="8" y="2" width="1" height="1" fill="#fff"/><rect x="13" y="3" width="1" height="1" fill="#fff"/><rect x="1" y="7" width="1" height="1" fill="#fff"/><rect x="6" y="6" width="1" height="1" fill="#fff"/><rect x="10" y="8" width="1" height="1" fill="#fff"/><rect x="14" y="8" width="1" height="1" fill="#fff"/><rect x="4" y="10" width="1" height="1" fill="#fff"/></g></svg><div class="a t " style="left:329px;top:196px;">Background</div><div class="a doth" style="left:282px;top:223px;width:11px;height:1px;"></div><div class="a cb" style="left:294px;top:217px;width:11px;height:11px;"></div><svg class="a" style="left:310px;top:219px" width="12" height="6" viewBox="0 0 12 6" shape-rendering="crispEdges"><rect width="12" height="6" fill="#ff00ff"/></svg><div class="a t " style="left:329px;top:214px;">ColorRectangle</div><div class="a doth" style="left:282px;top:241px;width:11px;height:1px;"></div><div class="a cb" style="left:294px;top:235px;width:11px;height:11px;"></div><svg class="a" style="left:310px;top:235px" width="11" height="11" viewBox="0 0 11 11" shape-rendering="crispEdges"><path d="M0 0 H11 V3 H7 V11 H4 V3 H0 Z" fill="#000"/></svg><div class="a t " style="left:329px;top:232px;">Text</div><div class="a doth" style="left:282px;top:259px;width:11px;height:1px;"></div><div class="a cb" style="left:294px;top:253px;width:11px;height:11px;"></div><svg class="a" style="left:308px;top:253px" width="16" height="10" viewBox="0 0 16 10" ><rect x="0" y="0" width="16" height="10" fill="#fff"/><path d="M0.500 10 V0.500 H16" stroke="#000" fill="none"/><path d="M1.500 10 V1.500 H16" stroke="#404040" fill="none" opacity="0.500"/><path d="M15.500 1 V9.500 H1" stroke="#c6c3c6" fill="none"/><text x="2" y="8.500" font-family="Liberation Sans,sans-serif" font-size="9" font-weight="bold" fill="#000084" textLength="10" lengthAdjust="spacingAndGlyphs">ab</text><path d="M13.500 2.500 V8 M12 2.500 H15 M12 8.500 H15" stroke="#000" stroke-width="1"/></svg><div class="a t " style="left:329px;top:250px;">WinControl</div><div class="a doth" style="left:282px;top:277px;width:11px;height:1px;"></div><div class="a cb" style="left:294px;top:271px;width:11px;height:11px;"></div><svg class="a" style="left:309px;top:270px" width="14" height="12" viewBox="0 0 14 12" shape-rendering="crispEdges"><rect width="14" height="12" fill="#0000ff"/><path d="M0 0 H4 L2 2 L0 1 Z" fill="#ffff00"/><path d="M0 9 H5 L3 12 H0 Z" fill="#00ffff"/><path d="M14 7 L9 8 L5 10 L3 12 H14 Z" fill="#ffff00"/><path d="M9 3 L11 1 L14 1 V5 L12 4 L10 5 Z" fill="#00c000"/><rect x="11" y="4" width="2" height="4" fill="#806000"/></svg><div class="a t " style="left:329px;top:268px;">Image</div><div class="a doth" style="left:282px;top:295px;width:11px;height:1px;"></div><div class="a cb" style="left:294px;top:289px;width:11px;height:11px;"></div><svg class="a" style="left:309px;top:287px" width="14" height="13" viewBox="0 0 14 13" shape-rendering="crispEdges"><path d="M0 6 H4 V8 H3 V13 H1 V8 H0 Z" fill="#000"/><rect x="1" y="0" width="2" height="1" fill="#000"/><rect x="2" y="2" width="1" height="2" fill="#000"/><path d="M5 6 H9 V8 H8 V13 H6 V8 H5 Z" fill="#000"/><rect x="6" y="1" width="2" height="1" fill="#000"/><rect x="7" y="3" width="1" height="2" fill="#000"/><path d="M10 6 H14 V8 H13 V13 H11 V8 H10 Z" fill="#000"/><rect x="11" y="3" width="2" height="1" fill="#000"/><rect x="12" y="5" width="1" height="2" fill="#000"/></svg><div class="a t" style="left:327px;top:285px;height:18px;line-height:16px;padding:2px 3px 0 2px;background:#000084;color:#fff;outline:1px dotted #ffff60;outline-offset:-1px;">TextAnimator</div><div class="a doth" style="left:282px;top:313px;width:11px;height:1px;"></div><div class="a cb" style="left:294px;top:307px;width:11px;height:11px;"><svg class="a" style="left:1px;top:1px" width="7" height="7" viewBox="0 0 7 7" shape-rendering="crispEdges"><path d="M0 2 H1 V3 H2 V4 H3 V3 H4 V2 H5 V1 H6 V0 H7 V3 H6 V4 H5 V5 H4 V6 H3 V7 H2 V6 H1 V5 H0 Z" fill="#000"/></svg></div><svg class="a" style="left:309px;top:306px" width="14" height="12" viewBox="0 0 14 12" shape-rendering="crispEdges"><rect width="14" height="12" fill="#0000ff"/><path d="M0 0 H4 L2 2 L0 1 Z" fill="#ffff00"/><path d="M0 9 H5 L3 12 H0 Z" fill="#00ffff"/><path d="M14 7 L9 8 L5 10 L3 12 H14 Z" fill="#ffff00"/><path d="M9 3 L11 1 L14 1 V5 L12 4 L10 5 Z" fill="#00c000"/><rect x="11" y="4" width="2" height="4" fill="#806000"/></svg><div class="a t " style="left:329px;top:304px;">Image</div><div class="a doth" style="left:282px;top:331px;width:11px;height:1px;"></div><div class="a cb" style="left:294px;top:325px;width:11px;height:11px;"><svg class="a" style="left:1px;top:1px" width="7" height="7" viewBox="0 0 7 7" shape-rendering="crispEdges"><path d="M0 2 H1 V3 H2 V4 H3 V3 H4 V2 H5 V1 H6 V0 H7 V3 H6 V4 H5 V5 H4 V6 H3 V7 H2 V6 H1 V5 H0 Z" fill="#000"/></svg></div><svg class="a" style="left:310px;top:327px" width="12" height="6" viewBox="0 0 12 6" shape-rendering="crispEdges"><rect width="12" height="6" fill="#ff00ff"/></svg><div class="a t " style="left:329px;top:322px;">ColorRectangle</div><div class="a doth" style="left:282px;top:349px;width:11px;height:1px;"></div><div class="a cb" style="left:294px;top:343px;width:11px;height:11px;"><svg class="a" style="left:1px;top:1px" width="7" height="7" viewBox="0 0 7 7" shape-rendering="crispEdges"><path d="M0 2 H1 V3 H2 V4 H3 V3 H4 V2 H5 V1 H6 V0 H7 V3 H6 V4 H5 V5 H4 V6 H3 V7 H2 V6 H1 V5 H0 Z" fill="#000"/></svg></div><svg class="a" style="left:309px;top:342px" width="14" height="12" viewBox="0 0 14 12" shape-rendering="crispEdges"><rect width="14" height="12" fill="#0000ff"/><path d="M0 0 H4 L2 2 L0 1 Z" fill="#ffff00"/><path d="M0 9 H5 L3 12 H0 Z" fill="#00ffff"/><path d="M14 7 L9 8 L5 10 L3 12 H14 Z" fill="#ffff00"/><path d="M9 3 L11 1 L14 1 V5 L12 4 L10 5 Z" fill="#00c000"/><rect x="11" y="4" width="2" height="4" fill="#806000"/></svg><div class="a t " style="left:329px;top:340px;">Image</div><div class="a doth" style="left:282px;top:367px;width:11px;height:1px;"></div><div class="a cb" style="left:294px;top:361px;width:11px;height:11px;"><svg class="a" style="left:1px;top:1px" width="7" height="7" viewBox="0 0 7 7" shape-rendering="crispEdges"><path d="M0 2 H1 V3 H2 V4 H3 V3 H4 V2 H5 V1 H6 V0 H7 V3 H6 V4 H5 V5 H4 V6 H3 V7 H2 V6 H1 V5 H0 Z" fill="#000"/></svg></div><svg class="a" style="left:310px;top:363px" width="12" height="6" viewBox="0 0 12 6" shape-rendering="crispEdges"><rect width="12" height="6" fill="#ff00ff"/></svg><div class="a t " style="left:329px;top:358px;">ColorRectangle</div><div class="a doth" style="left:282px;top:385px;width:11px;height:1px;"></div><div class="a cb" style="left:294px;top:379px;width:11px;height:11px;"><svg class="a" style="left:1px;top:1px" width="7" height="7" viewBox="0 0 7 7" shape-rendering="crispEdges"><path d="M0 2 H1 V3 H2 V4 H3 V3 H4 V2 H5 V1 H6 V0 H7 V3 H6 V4 H5 V5 H4 V6 H3 V7 H2 V6 H1 V5 H0 Z" fill="#000"/></svg></div><svg class="a" style="left:309px;top:378px" width="14" height="12" viewBox="0 0 14 12" shape-rendering="crispEdges"><rect width="14" height="12" fill="#0000ff"/><path d="M0 0 H4 L2 2 L0 1 Z" fill="#ffff00"/><path d="M0 9 H5 L3 12 H0 Z" fill="#00ffff"/><path d="M14 7 L9 8 L5 10 L3 12 H14 Z" fill="#ffff00"/><path d="M9 3 L11 1 L14 1 V5 L12 4 L10 5 Z" fill="#00c000"/><rect x="11" y="4" width="2" height="4" fill="#806000"/></svg><div class="a t " style="left:329px;top:376px;">Image</div><div class="a doth" style="left:282px;top:403px;width:11px;height:1px;"></div><div class="a cb" style="left:294px;top:397px;width:11px;height:11px;"></div><svg class="a" style="left:310px;top:397px" width="11" height="11" viewBox="0 0 11 11" shape-rendering="crispEdges"><path d="M0 0 H11 V3 H7 V11 H4 V3 H0 Z" fill="#000"/></svg><div class="a t " style="left:329px;top:394px;">Text</div><div class="a doth" style="left:282px;top:421px;width:11px;height:1px;"></div><div class="a cb" style="left:294px;top:415px;width:11px;height:11px;"></div><svg class="a" style="left:308px;top:415px" width="16" height="10" viewBox="0 0 16 10" ><rect x="0" y="0" width="16" height="10" fill="#fff"/><path d="M0.500 10 V0.500 H16" stroke="#000" fill="none"/><path d="M1.500 10 V1.500 H16" stroke="#404040" fill="none" opacity="0.500"/><path d="M15.500 1 V9.500 H1" stroke="#c6c3c6" fill="none"/><text x="2" y="8.500" font-family="Liberation Sans,sans-serif" font-size="9" font-weight="bold" fill="#000084" textLength="10" lengthAdjust="spacingAndGlyphs">ab</text><path d="M13.500 2.500 V8 M12 2.500 H15 M12 8.500 H15" stroke="#000" stroke-width="1"/></svg><div class="a t " style="left:329px;top:412px;">WinControl</div><div class="a doth" style="left:282px;top:439px;width:11px;height:1px;"></div><div class="a cb" style="left:294px;top:433px;width:11px;height:11px;"></div><svg class="a" style="left:310px;top:435px" width="12" height="6" viewBox="0 0 12 6" shape-rendering="crispEdges"><rect width="12" height="6" fill="#ff00ff"/></svg><div class="a t " style="left:329px;top:430px;">ColorRectangle</div><div class="a sunk1" style="left:251px;top:530px;width:99px;height:17px;"></div><div class="a t " style="left:256px;top:529px;">15 objects</div><div class="a sunk1" style="left:353px;top:530px;width:98px;height:17px;"></div><div class="a sunk1" style="left:453px;top:530px;width:455px;height:17px;"></div><div class="a t " style="left:456px;top:529px;letter-spacing:-0.12px;">size: 6.544 bytes; approx. loadtime @ 28k8: 2,5 seconds</div><svg class="a" style="left:895px;top:534px" width="12" height="12" viewBox="0 0 12 12" ><path d="M11 0 L0 11 M11 4 L4 11 M11 8 L8 11" stroke="#848284" stroke-width="1.400"/><path d="M11 1.200 L1.200 11 M11 5.200 L5.200 11 M11 9.200 L9.200 11" stroke="#fff" stroke-width="0.800" transform="translate(-1.500,-1.500)"/></svg>
<div class="a " style="left:479px;top:198px;width:428px;height:329px;box-shadow:inset 1px 1px #fff,inset -1px -1px #000,inset -2px -2px #848284;"></div>
<div class="a" style="left:481px;top:178px;width:100px;height:20px;background:#c6c3c6;"></div><div class="a " style="left:481px;top:180px;width:1px;height:18px;background:#fff;"></div><div class="a " style="left:482px;top:179px;width:1px;height:1px;background:#fff;"></div><div class="a " style="left:483px;top:178px;width:96px;height:1px;background:#fff;"></div><div class="a " style="left:579px;top:180px;width:1px;height:18px;background:#848284;"></div><div class="a " style="left:580px;top:180px;width:1px;height:18px;background:#000;"></div><div class="a " style="left:579px;top:179px;width:1px;height:1px;background:#000;"></div><div class="a t " style="left:481px;top:179px;width:100px;text-align:center;">Timing</div>
<div class="a" style="left:681px;top:178px;width:100px;height:20px;background:#c6c3c6;"></div><div class="a " style="left:681px;top:180px;width:1px;height:18px;background:#fff;"></div><div class="a " style="left:682px;top:179px;width:1px;height:1px;background:#fff;"></div><div class="a " style="left:683px;top:178px;width:96px;height:1px;background:#fff;"></div><div class="a " style="left:779px;top:180px;width:1px;height:18px;background:#848284;"></div><div class="a " style="left:780px;top:180px;width:1px;height:18px;background:#000;"></div><div class="a " style="left:779px;top:179px;width:1px;height:1px;background:#000;"></div><div class="a t " style="left:681px;top:179px;width:100px;text-align:center;">3-D</div>
<div class="a" style="left:781px;top:178px;width:100px;height:20px;background:#c6c3c6;"></div><div class="a " style="left:781px;top:180px;width:1px;height:18px;background:#fff;"></div><div class="a " style="left:782px;top:179px;width:1px;height:1px;background:#fff;"></div><div class="a " style="left:783px;top:178px;width:96px;height:1px;background:#fff;"></div><div class="a " style="left:879px;top:180px;width:1px;height:18px;background:#848284;"></div><div class="a " style="left:880px;top:180px;width:1px;height:18px;background:#000;"></div><div class="a " style="left:879px;top:179px;width:1px;height:1px;background:#000;"></div><div class="a t " style="left:781px;top:179px;width:100px;text-align:center;">Animation</div>
<div class="a" style="left:579px;top:176px;width:104px;height:23px;background:#c6c3c6;"></div><div class="a " style="left:579px;top:178px;width:1px;height:21px;background:#fff;"></div><div class="a " style="left:580px;top:177px;width:1px;height:1px;background:#fff;"></div><div class="a " style="left:581px;top:176px;width:100px;height:1px;background:#fff;"></div><div class="a " style="left:681px;top:178px;width:1px;height:21px;background:#848284;"></div><div class="a " style="left:682px;top:178px;width:1px;height:21px;background:#000;"></div><div class="a " style="left:681px;top:177px;width:1px;height:1px;background:#000;"></div><div class="a t " style="left:579px;top:177px;width:104px;text-align:center;">Text</div>
<div class="a t " style="left:480px;top:229px;width:92px;text-align:right;">Position:</div>
<div class="a sunk white" style="left:579px;top:227px;width:56px;height:23px;"></div><div class="a t " style="left:582px;top:229px;">44</div>
<div class="a btn" style="left:636px;top:227px;width:15px;height:12px;"><svg class="a" style="left:0px;top:0px" width="15" height="12" viewBox="0 0 15 12" ><path d="M4 7.500 H11 L7.500 4 Z" fill="#000"/></svg></div><div class="a btn" style="left:636px;top:239px;width:15px;height:11px;"><svg class="a" style="left:0px;top:0px" width="15" height="11" viewBox="0 0 15 11" ><path d="M4 4 H11 L7.500 7.500 Z" fill="#000"/></svg></div>
<div class="a t " style="left:658px;top:229px;">:</div>
<div class="a sunk white" style="left:667px;top:227px;width:57px;height:23px;"></div><div class="a t " style="left:670px;top:229px;">34</div>
<div class="a btn" style="left:725px;top:227px;width:15px;height:12px;"><svg class="a" style="left:0px;top:0px" width="15" height="12" viewBox="0 0 15 12" ><path d="M4 7.500 H11 L7.500 4 Z" fill="#000"/></svg></div><div class="a btn" style="left:725px;top:239px;width:15px;height:11px;"><svg class="a" style="left:0px;top:0px" width="15" height="11" viewBox="0 0 15 11" ><path d="M4 4 H11 L7.500 7.500 Z" fill="#000"/></svg></div>
<div class="a t " style="left:747px;top:229px;">(x : y)</div>
<div class="a t " style="left:480px;top:261px;width:92px;text-align:right;">Size:</div>
<div class="a sunk white" style="left:579px;top:259px;width:56px;height:23px;"></div><div class="a t " style="left:582px;top:261px;">198</div>
<div class="a btn" style="left:636px;top:259px;width:15px;height:12px;"><svg class="a" style="left:0px;top:0px" width="15" height="12" viewBox="0 0 15 12" ><path d="M4 7.500 H11 L7.500 4 Z" fill="#000"/></svg></div><div class="a btn" style="left:636px;top:271px;width:15px;height:11px;"><svg class="a" style="left:0px;top:0px" width="15" height="11" viewBox="0 0 15 11" ><path d="M4 4 H11 L7.500 7.500 Z" fill="#000"/></svg></div>
<div class="a t " style="left:658px;top:261px;">:</div>
<div class="a sunk white" style="left:667px;top:259px;width:57px;height:23px;"></div><div class="a t " style="left:670px;top:261px;">16</div>
<div class="a btn" style="left:725px;top:259px;width:15px;height:12px;"><svg class="a" style="left:0px;top:0px" width="15" height="12" viewBox="0 0 15 12" ><path d="M4 7.500 H11 L7.500 4 Z" fill="#000"/></svg></div><div class="a btn" style="left:725px;top:271px;width:15px;height:11px;"><svg class="a" style="left:0px;top:0px" width="15" height="11" viewBox="0 0 15 11" ><path d="M4 4 H11 L7.500 7.500 Z" fill="#000"/></svg></div>
<div class="a t " style="left:747px;top:261px;letter-spacing:-0.25px;">(width : height)</div>
<div class="a btn" style="left:848px;top:255px;width:30px;height:30px;"><svg class="a" style="left:0px;top:0px" width="30" height="30" viewBox="0 0 30 30" ><polygon points="22.3,14.5 19.5,15.8 19.0,17.1 20.0,20.0 17.1,19.0 15.8,19.5 14.5,22.3 13.2,19.5 11.9,19.0 9.0,20.0 10.0,17.1 9.5,15.8 6.7,14.5 9.5,13.2 10.0,11.9 9.0,9.0 11.9,10.0 13.2,9.5 14.5,6.7 15.8,9.5 17.1,10.0 20.0,9.0 19.0,11.9 19.5,13.2" fill="#ffff00"/><ellipse cx="14.500" cy="14" rx="3.200" ry="3.800" fill="#fff" stroke="#000" stroke-width="1.100"/><path d="M13.500 17.500 V21 L14.500 22.500 L15.500 21 V17.500" fill="#c6c3c6" stroke="#000" stroke-width="1"/><path d="M14.500 12 V16" stroke="#848284" stroke-width="0.800"/></svg></div>
<div class="a t " style="left:480px;top:294px;width:92px;text-align:right;">Aliasing:</div>
<div class="a sunk white" style="left:579px;top:297px;width:13px;height:13px;"></div>
<div class="a t " style="left:598px;top:294px;">Try font aliasing</div>
<div class="a sunk" style="left:732px;top:297px;width:13px;height:13px;background:#c6c3c6;"></div>
<div class="a t dis" style="left:750px;top:294px;">Use 3D</div>
<div class="a t " style="left:480px;top:324px;width:92px;text-align:right;">Text:</div>
<div class="a sunk white" style="left:579px;top:322px;width:281px;height:184px;"></div>
<div class="a t " style="left:582px;top:324px;">free animation program</div>
<div class="a chk" style="left:842px;top:324px;width:16px;height:180px;"></div>
<div class="a win" style="left:842px;top:324px;width:16px;height:16px;"><svg class="a" style="left:0px;top:0px" width="16" height="16" viewBox="0 0 16 16" ><path d="M5 11 H12 L8.500 7.500 Z" fill="#fff"/><path d="M4 10 H11 L7.500 6.500 Z" fill="#848284"/></svg></div>
<div class="a win" style="left:842px;top:488px;width:16px;height:16px;"><svg class="a" style="left:0px;top:0px" width="16" height="16" viewBox="0 0 16 16" ><path d="M5 7 H12 L8.500 10.500 Z" fill="#fff"/><path d="M4 6 H11 L7.500 9.500 Z" fill="#848284"/></svg></div>
<div class="a btn" style="left:860px;top:322px;width:30px;height:30px;"><div class="a t b" style="left:0px;top:6px;width:30px;text-align:center;color:#901010;font-size:17.5px;-webkit-text-stroke:0.5px #901010;">F</div></div>
<svg class="a" style="left:390px;top:345px" width="145" height="35" viewBox="0 0 145 35" ><text x="3" y="24.500" font-family="Liberation Sans,sans-serif" font-weight="bold" font-size="18.500" fill="#8890a8" stroke="#8890a8" opacity="0.380" stroke-width="1.200" stroke-linejoin="round" textLength="107" lengthAdjust="spacingAndGlyphs">download</text><circle cx="125.500" cy="16.700" r="12.500" fill="rgba(200,205,220,0.250)" stroke="rgba(215,220,232,0.800)" stroke-width="1"/><text x="125.500" y="23.500" text-anchor="middle" font-family="Liberation Sans,sans-serif" font-size="19" fill="rgba(170,178,200,0.850)" textLength="17" lengthAdjust="spacingAndGlyphs">3k</text></svg>
<div class="a win" style="left:206px;top:40px;width:153px;height:220px;"></div><div class="a t " style="left:231px;top:44px;">Select <u>a</u>ll</div><div class="a t " style="left:231px;top:63px;">Select <u>n</u>one</div><div class="a t " style="left:231px;top:82px;">Select <u>i</u>nverse</div><div class="a navy" style="left:209px;top:100px;width:147px;height:19px;"></div><div class="a t w" style="left:231px;top:101px;"><u>S</u>election</div><svg class="a" style="left:345px;top:105px" width="5" height="9" viewBox="0 0 5 9" ><path d="M0 0 L4.500 4.500 L0 9 Z" fill="#fff"/></svg><div class="a hsep" style="left:210px;top:122px;width:145px;height:2px;"></div><div class="a t " style="left:231px;top:128px;">Ne<u>w</u></div><svg class="a" style="left:210px;top:129px" width="16" height="15" viewBox="0 0 16 15" ><rect x="0.5" y="8.5" width="11" height="5" fill="#fff" stroke="#000"/><path d="M11.5 6.5 V1 M11.5 6.5 L8 3 M11.5 6.5 L15 3 M11.5 6.5 H15.5 M11.5 6.5 L14 9" stroke="#000" stroke-width="0.9" fill="none"/></svg><svg class="a" style="left:345px;top:132px" width="5" height="9" viewBox="0 0 5 9" ><path d="M0 0 L4.500 4.500 L0 9 Z" fill="#000"/></svg><div class="a hsep" style="left:210px;top:149px;width:145px;height:2px;"></div><div class="a t " style="left:231px;top:155px;">Move to t<u>o</u>p</div><svg class="a" style="left:211px;top:157.5px" width="15" height="11" viewBox="0 0 15 11" ><path d="M0.8 4.5 L7.5 1 L14.2 4.5" stroke="#000" stroke-width="1.7" fill="none" stroke-linejoin="miter"/><path d="M0.8 9.5 L7.5 6 L14.2 9.5" stroke="#000" stroke-width="1.7" fill="none" stroke-linejoin="miter"/></svg><div class="a t " style="left:231px;top:174px;">Move u<u>p</u></div><svg class="a" style="left:211px;top:179px" width="15" height="11" viewBox="0 0 15 11" ><path d="M0.8 4.5 L7.5 1 L14.2 4.5" stroke="#000" stroke-width="1.7" fill="none" stroke-linejoin="miter"/></svg><div class="a t " style="left:231px;top:193px;"><u>M</u>ove down</div><svg class="a" style="left:211px;top:198px" width="15" height="11" viewBox="0 0 15 11" ><path d="M0.8 1 L7.5 4.5 L14.2 1" stroke="#000" stroke-width="1.7" fill="none" stroke-linejoin="miter"/></svg><div class="a t " style="left:231px;top:212px;">Move to <u>b</u>ottom</div><svg class="a" style="left:211px;top:215.5px" width="15" height="11" viewBox="0 0 15 11" ><path d="M0.8 1 L7.5 4.5 L14.2 1" stroke="#000" stroke-width="1.7" fill="none" stroke-linejoin="miter"/><path d="M0.8 6 L7.5 9.5 L14.2 6" stroke="#000" stroke-width="1.7" fill="none" stroke-linejoin="miter"/></svg><div class="a hsep" style="left:210px;top:233px;width:145px;height:2px;"></div><div class="a t " style="left:231px;top:239px;">Pre<u>v</u>iew</div><svg class="a" style="left:211px;top:242px" width="17" height="11" viewBox="0 0 17 11" ><ellipse cx="8.500" cy="5.500" rx="8" ry="5" fill="#808000" stroke="#000" stroke-width="1"/><ellipse cx="8.500" cy="4.500" rx="4" ry="4" fill="#000"/><rect x="7" y="2" width="2" height="2" fill="#fff"/></svg>
<div class="a win" style="left:352px;top:97px;width:144px;height:71px;"></div><div class="a t " style="left:377px;top:101px;">Change de<u>l</u>ay</div><div class="a navy" style="left:355px;top:119px;width:138px;height:19px;"></div><div class="a t w" style="left:377px;top:120px;"><u>M</u>ove</div><div class="a hsep" style="left:356px;top:141px;width:136px;height:2px;"></div><div class="a t " style="left:377px;top:147px;"><u>D</u>elete</div>
<svg class="a" style="left:209px;top:669px" width="88" height="31" viewBox="0 0 88 31" ><rect width="88" height="31" fill="#0030f0"/>
<g font-family="Liberation Sans,sans-serif" font-weight="bold" paint-order="stroke" stroke="#000" stroke-linejoin="round">
<text x="2" y="12.500" font-size="13.500" fill="#ffff00" stroke-width="2" textLength="34" lengthAdjust="spacing">AOL</text>
<text x="57.500" y="9.500" font-size="9" fill="#30e860" stroke-width="1.600" textLength="20" lengthAdjust="spacingAndGlyphs">ALL</text>
<text x="59" y="18.500" font-size="9.500" fill="#30e860" stroke-width="1.600" textLength="25" lengthAdjust="spacingAndGlyphs">NEW</text>
<text x="67.500" y="29" font-size="10.500" fill="#30e860" stroke-width="1.600" textLength="18" lengthAdjust="spacingAndGlyphs">4.0</text>
<rect x="1" y="19.500" width="57" height="10.500" fill="#000" stroke="none"/>
<text x="2" y="29" font-size="12" fill="#fff" stroke-width="1.600" textLength="55" lengthAdjust="spacingAndGlyphs">Click Here!</text>
</g>
<path d="M47 3.500 L39.500 16 H54.500 Z" fill="#fff"/><circle cx="47" cy="11.500" r="2.800" fill="#3050d0"/></svg>
<svg class="a" style="left:347px;top:669px" width="88" height="31" viewBox="0 0 88 31" ><rect width="88" height="31" fill="#000868"/>
<rect x="0" y="23.500" width="88" height="7.500" fill="#d80010"/>
<path d="M8.500 3 H35 L31 21.500 H4.500 Z" fill="#1858a0" stroke="#fff" stroke-width="1"/>
<path d="M9 4 L31 9.500 L20 12.500 Z" fill="#fff"/><path d="M5.500 20.500 L22 12.500 L31 10.500 L26 14 Z" fill="#fff"/>
<path d="M18 9.500 L27 10.500 L20 11.800 Z" fill="#1858a0"/>
<g font-family="Liberation Sans,sans-serif" font-weight="bold" font-style="italic" fill="#fff">
<text x="38" y="10" font-size="10" textLength="46" lengthAdjust="spacingAndGlyphs">PRIORITY</text>
<text x="36" y="21.500" font-size="10" textLength="24.500" lengthAdjust="spacingAndGlyphs">MAIL</text></g>
<rect x="38" y="11.500" width="40" height="1" fill="#fff"/>
<text x="9" y="30" font-family="Liberation Sans,sans-serif" font-weight="bold" font-size="7" fill="#000868" textLength="71" lengthAdjust="spacing">CLICK HERE</text></svg>
<div class="a sunk1" style="left:3px;top:704px;width:200px;height:17px;"></div>
<div class="a t " style="left:3px;top:704px;width:200px;text-align:center;">vrijdag 1 december 2000</div>
<div class="a sunk1" style="left:205px;top:704px;width:73px;height:17px;"></div>
<div class="a t " style="left:205px;top:704px;width:73px;text-align:center;">11:06</div>
<div class="a sunk1" style="left:280px;top:704px;width:638px;height:17px;"></div>
<div class="a t " style="left:289px;top:704px;">Change the location for the selected objects</div>
<svg class="a" style="left:905px;top:708px" width="12" height="12" viewBox="0 0 12 12" ><path d="M11 0 L0 11 M11 4 L4 11 M11 8 L8 11" stroke="#848284" stroke-width="1.4"/><path d="M11 1.200 L1.200 11 M11 5.200 L5.200 11 M11 9.200 L9.200 11" stroke="#fff" stroke-width="0.8" transform="translate(-1.500,-1.500)"/></svg>
</body></html>
